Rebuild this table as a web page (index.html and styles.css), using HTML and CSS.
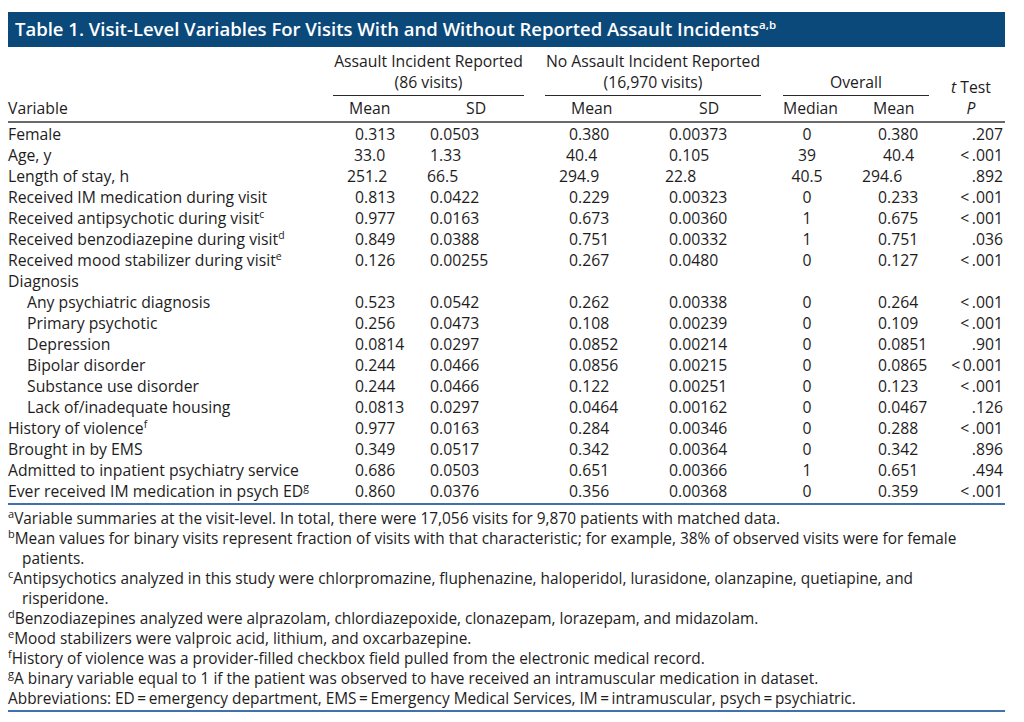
FILE: index.html
```html
<!DOCTYPE html>
<html lang="en">
<head>
<meta charset="utf-8">
<title>Table 1</title>
<link rel="stylesheet" href="styles.css">
</head>
<body>
<div class="page">
  <div class="titlebar">Table 1. Visit-Level Variables For Visits With and Without Reported Assault Incidents<sup>a,b</sup></div>

  <div class="head">
    <div class="grp g-a">Assault Incident Reported<br>(86 visits)</div>
    <div class="grp g-n">No Assault Incident Reported<br>(16,970 visits)</div>
    <div class="grp g-o">Overall</div>
    <div class="ttest"><i>t</i> Test<br><i>P</i></div>
    <div class="hc h1">Variable</div>
    <div class="hc h2">Mean</div>
    <div class="hc h3">SD</div>
    <div class="hc h4">Mean</div>
    <div class="hc h5">SD</div>
    <div class="hc h6">Median</div>
    <div class="hc h7">Mean</div>
  </div>

  <div class="body">
    <div class="row"><div class="v">Female</div><div class="am">0.313</div><div class="as">0.0503</div><div class="nm">0.380</div><div class="ns">0.00373</div><div class="md">0</div><div class="om">0.380</div><div class="p">.207</div></div>
    <div class="row"><div class="v">Age, y</div><div class="am n1">33.0</div><div class="as">1.33</div><div class="nm n3">40.4</div><div class="ns">0.105</div><div class="md">39</div><div class="om p5">40.4</div><div class="p">&lt;&#8201;.001</div></div>
    <div class="row"><div class="v">Length of stay, h</div><div class="am n8">251.2</div><div class="as n3">66.5</div><div class="nm n10">294.9</div><div class="ns n4">22.8</div><div class="md">40.5</div><div class="om n16">294.6</div><div class="p">.892</div></div>
    <div class="row"><div class="v">Received IM medication during visit</div><div class="am">0.813</div><div class="as">0.0422</div><div class="nm">0.229</div><div class="ns">0.00323</div><div class="md">0</div><div class="om">0.233</div><div class="p">&lt;&#8201;.001</div></div>
    <div class="row"><div class="v">Received antipsychotic during visit<sup>c</sup></div><div class="am">0.977</div><div class="as">0.0163</div><div class="nm">0.673</div><div class="ns">0.00360</div><div class="md">1</div><div class="om">0.675</div><div class="p">&lt;&#8201;.001</div></div>
    <div class="row"><div class="v">Received benzodiazepine during visit<sup>d</sup></div><div class="am">0.849</div><div class="as">0.0388</div><div class="nm">0.751</div><div class="ns">0.00332</div><div class="md">1</div><div class="om">0.751</div><div class="p">.036</div></div>
    <div class="row"><div class="v">Received mood stabilizer during visit<sup>e</sup></div><div class="am">0.126</div><div class="as">0.00255</div><div class="nm">0.267</div><div class="ns">0.0480</div><div class="md">0</div><div class="om">0.127</div><div class="p">&lt;&#8201;.001</div></div>
    <div class="row"><div class="v">Diagnosis</div></div>
    <div class="row"><div class="v sub">Any psychiatric diagnosis</div><div class="am">0.523</div><div class="as">0.0542</div><div class="nm">0.262</div><div class="ns">0.00338</div><div class="md">0</div><div class="om">0.264</div><div class="p">&lt;&#8201;.001</div></div>
    <div class="row"><div class="v sub">Primary psychotic</div><div class="am">0.256</div><div class="as">0.0473</div><div class="nm">0.108</div><div class="ns">0.00239</div><div class="md">0</div><div class="om">0.109</div><div class="p">&lt;&#8201;.001</div></div>
    <div class="row"><div class="v sub">Depression</div><div class="am">0.0814</div><div class="as">0.0297</div><div class="nm">0.0852</div><div class="ns">0.00214</div><div class="md">0</div><div class="om">0.0851</div><div class="p">.901</div></div>
    <div class="row"><div class="v sub">Bipolar disorder</div><div class="am">0.244</div><div class="as">0.0466</div><div class="nm">0.0856</div><div class="ns">0.00215</div><div class="md">0</div><div class="om">0.0865</div><div class="p">&lt;&#8201;0.001</div></div>
    <div class="row"><div class="v sub">Substance use disorder</div><div class="am">0.244</div><div class="as">0.0466</div><div class="nm">0.122</div><div class="ns">0.00251</div><div class="md">0</div><div class="om">0.123</div><div class="p">&lt;&#8201;.001</div></div>
    <div class="row"><div class="v sub">Lack of/inadequate housing</div><div class="am">0.0813</div><div class="as">0.0297</div><div class="nm">0.0464</div><div class="ns">0.00162</div><div class="md">0</div><div class="om">0.0467</div><div class="p">.126</div></div>
    <div class="row"><div class="v">History of violence<sup>f</sup></div><div class="am">0.977</div><div class="as">0.0163</div><div class="nm">0.284</div><div class="ns">0.00346</div><div class="md">0</div><div class="om">0.288</div><div class="p">&lt;&#8201;.001</div></div>
    <div class="row"><div class="v">Brought in by EMS</div><div class="am">0.349</div><div class="as">0.0517</div><div class="nm">0.342</div><div class="ns">0.00364</div><div class="md">0</div><div class="om">0.342</div><div class="p">.896</div></div>
    <div class="row"><div class="v">Admitted to inpatient psychiatry service</div><div class="am">0.686</div><div class="as">0.0503</div><div class="nm">0.651</div><div class="ns">0.00366</div><div class="md">1</div><div class="om">0.651</div><div class="p">.494</div></div>
    <div class="row"><div class="v">Ever received IM medication in psych ED<sup>g</sup></div><div class="am">0.860</div><div class="as">0.0376</div><div class="nm">0.356</div><div class="ns">0.00368</div><div class="md">0</div><div class="om">0.359</div><div class="p">&lt;&#8201;.001</div></div>
  </div>

  <div class="notes">
    <p><sup>a</sup>Variable summaries at the visit-level. In total, there were 17,056 visits for 9,870 patients with matched data.</p>
    <p><sup>b</sup>Mean values for binary visits represent fraction of visits with that characteristic; for example, 38% of observed visits were for female<br>patients.</p>
    <p><sup>c</sup>Antipsychotics analyzed in this study were chlorpromazine, fluphenazine, haloperidol, lurasidone, olanzapine, quetiapine, and<br>risperidone.</p>
    <p><sup>d</sup>Benzodiazepines analyzed were alprazolam, chlordiazepoxide, clonazepam, lorazepam, and midazolam.</p>
    <p><sup>e</sup>Mood stabilizers were valproic acid, lithium, and oxcarbazepine.</p>
    <p><sup>f</sup>History of violence was a provider-filled checkbox field pulled from the electronic medical record.</p>
    <p><sup>g</sup>A binary variable equal to 1 if the patient was observed to have received an intramuscular medication in dataset.</p>
    <p>Abbreviations: ED&#8201;=&#8201;emergency department, EMS&#8201;=&#8201;Emergency Medical Services, IM&#8201;=&#8201;intramuscular, psych&#8201;=&#8201;psychiatric.</p>
  </div>
</div>
</body>
</html>
```
FILE: styles.css
```css
html, body {
  margin: 0;
  padding: 0;
  background: #ffffff;
}
body {
  padding: 12px 8px 0 8px;
  font-family: "Open Sans", "Noto Sans", "Liberation Sans", sans-serif;
  font-size: 15.75px;
  color: #1e1c1d;
}
.page {
  width: 997px;
  --cols: 325px 91px 121px 105px 133px 67px 85px 70px;
}
.titlebar {
  height: 35px;
  line-height: 34px;
  background: #0b497b;
  color: #ffffff;
  font-weight: 600;
  font-size: 18.5px;
  padding-left: 7px;
  white-space: nowrap;
}
.titlebar sup {
  font-size: 11.5px;
  vertical-align: 7px;
  line-height: 0;
  font-weight: 600;
}
sup {
  font-size: 10.5px;
  line-height: 0;
  vertical-align: 6px;
}

/* header */
.head {
  display: grid;
  grid-template-columns: var(--cols);
  grid-template-rows: auto auto;
  margin-top: 4px;
  line-height: 21px;
  border-bottom: 2px solid #6a6a6a;
  padding-bottom: 2px;
  white-space: nowrap;
}
.grp {
  text-align: center;
  border-bottom: 1px solid #2a2a2a;
  padding-bottom: 2px;
  align-self: end;
}
.g-a { grid-column: 2 / 4; grid-row: 1; margin-right: 21px; }
.g-n { grid-column: 4 / 6; grid-row: 1; margin-right: 22px; }
.g-o { grid-column: 6 / 8; grid-row: 1; margin-right: 6px; }
.ttest {
  grid-column: 8;
  grid-row: 1 / 3;
  align-self: end;
  text-align: center;
  padding-left: 2px;
}
.hc { grid-row: 2; padding-top: 2px; }
.h1 { grid-column: 1; }
.h2 { grid-column: 2; padding-left: 16px; }
.h3 { grid-column: 3; padding-left: 42px; }
.h4 { grid-column: 4; padding-left: 26px; }
.h5 { grid-column: 5; padding-left: 49px; }
.h6 { grid-column: 6; }
.h7 { grid-column: 7; padding-left: 23px; }

/* body rows */
.body {
  padding-top: 1px;
}
.row {
  display: grid;
  grid-template-columns: var(--cols);
  height: 21px;
  line-height: 21px;
  white-space: nowrap;
}
.v { grid-column: 1; }
.v.sub { padding-left: 19px; }
.am { grid-column: 2; padding-left: 22px; }
.as { grid-column: 3; padding-left: 6px; }
.nm { grid-column: 4; padding-left: 24px; }
.ns { grid-column: 5; padding-left: 19px; }
.md { grid-column: 6; text-align: center; padding-right: 19px; }
.om { grid-column: 7; padding-left: 28px; }
.p { grid-column: 8; text-align: right; padding-right: 2px; }

.n1 { text-indent: -1px; }
.n3 { text-indent: -3px; }
.n4 { text-indent: -4px; }
.n8 { text-indent: -8px; }
.n10 { text-indent: -10px; }
.n16 { text-indent: -16px; }
.p5 { text-indent: 5px; }

/* footnotes */
.notes {
  border-top: 2px solid #3f72a8;
  border-bottom: 2px solid #3f72a8;
  margin-top: 1px;
  padding: 4px 0 1px 0;
  line-height: 20px;
  font-size: 15.4px;
}
.notes p {
  margin: 0;
  padding-left: 14px;
  text-indent: -14px;
  white-space: nowrap;
}
.notes sup {
  font-size: 11px;
  vertical-align: 6px;
}
```
